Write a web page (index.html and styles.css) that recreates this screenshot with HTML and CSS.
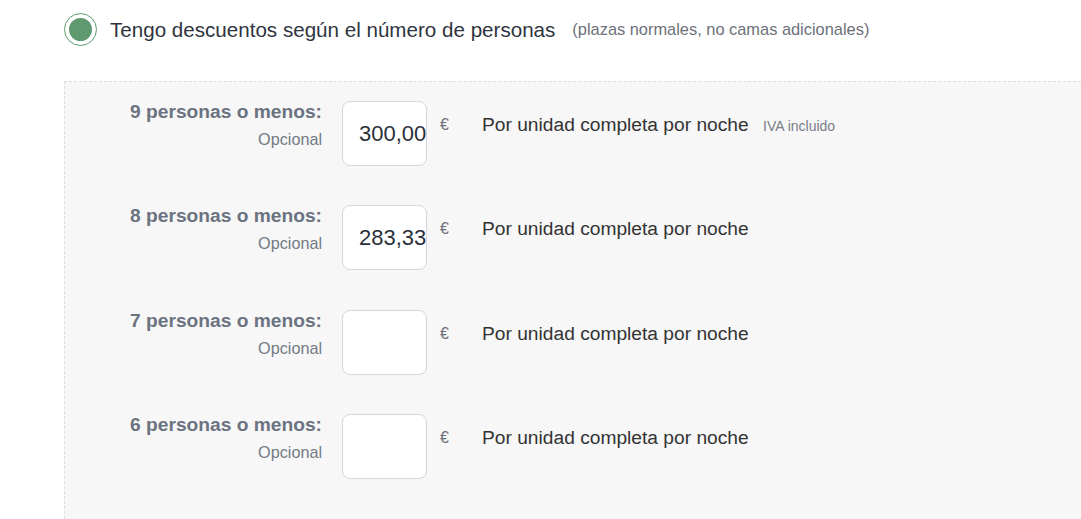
FILE: index.html
```html
<!DOCTYPE html>
<html lang="es">
<head>
<meta charset="utf-8">
<link rel="stylesheet" href="styles.css">
</head>
<body>
<div class="page">
  <label class="option">
    <span class="radio"><span class="radio-dot"></span></span>
    <span class="option-title">Tengo descuentos según el número de personas</span>
    <span class="option-note">(plazas normales, no camas adicionales)</span>
  </label>

  <div class="panel">
    <div class="row">
      <div class="label">
        <div class="label-main">9 personas o menos:</div>
        <div class="label-sub">Opcional</div>
      </div>
      <div class="field"><input class="price" type="text" value="300,00"></div>
      <div class="currency">€</div>
      <div class="desc">Por unidad completa por noche <span class="tax">IVA incluido</span></div>
    </div>
    <div class="row">
      <div class="label">
        <div class="label-main">8 personas o menos:</div>
        <div class="label-sub">Opcional</div>
      </div>
      <div class="field"><input class="price" type="text" value="283,33"></div>
      <div class="currency">€</div>
      <div class="desc">Por unidad completa por noche</div>
    </div>
    <div class="row">
      <div class="label">
        <div class="label-main">7 personas o menos:</div>
        <div class="label-sub">Opcional</div>
      </div>
      <div class="field"><input class="price" type="text" value=""></div>
      <div class="currency">€</div>
      <div class="desc">Por unidad completa por noche</div>
    </div>
    <div class="row">
      <div class="label">
        <div class="label-main">6 personas o menos:</div>
        <div class="label-sub">Opcional</div>
      </div>
      <div class="field"><input class="price" type="text" value=""></div>
      <div class="currency">€</div>
      <div class="desc">Por unidad completa por noche</div>
    </div>
  </div>
</div>
</body>
</html>
```

FILE: styles.css
```css
html, body {
  margin: 0;
  padding: 0;
  background: #ffffff;
  overflow: hidden;
}

body {
  font-family: "Liberation Sans", Arial, sans-serif;
  color: #333333;
  width: 1081px;
  height: 519px;
}

.page {
  box-sizing: border-box;
  height: 519px;
  padding: 13px 0 0 64px;
  display: flex;
  flex-direction: column;
}

.option {
  display: flex;
  align-items: center;
  height: 33px;
  flex: none;
}

.radio {
  box-sizing: border-box;
  width: 33px;
  height: 33px;
  border: 1px solid #5e9a6d;
  border-radius: 50%;
  display: flex;
  align-items: center;
  justify-content: center;
  background: #fff;
  flex: none;
}

.radio-dot {
  width: 23px;
  height: 23px;
  border-radius: 50%;
  background: #5e9a6d;
}

.option-title {
  margin-left: 13px;
  font-size: 20.6px;
  color: #2f3440;
}

.option-note {
  margin-left: 17px;
  font-size: 16.4px;
  color: #6c7079;
}

.panel {
  flex: 1;
  margin-top: 35px;
  border: 1px dashed #dedede;
  border-right: none;
  border-bottom: none;
  background: #f7f7f7;
  padding-top: 19px;
  box-sizing: border-box;
  overflow: hidden;
}

.row {
  display: flex;
  align-items: flex-start;
  height: 65px;
  margin-bottom: 39.4px;
}

.label {
  width: 257px;
  text-align: right;
}

.label-main {
  font-weight: bold;
  font-size: 19.2px;
  line-height: 22px;
  color: #6b7380;
}

.label-sub {
  margin-top: 6px;
  font-size: 16.2px;
  line-height: 20px;
  color: #737a85;
}

.field {
  margin-left: 20px;
}

.price {
  box-sizing: border-box;
  width: 85px;
  height: 65px;
  border: 1px solid #d6d6de;
  border-radius: 8px;
  background: #ffffff;
  padding: 0 0 0 16px;
  font-family: "Liberation Sans", Arial, sans-serif;
  font-size: 22px;
  color: #2b2f3a;
  outline: none;
}

.currency {
  margin-left: 13px;
  padding-top: 14px;
  font-size: 16px;
  line-height: 20px;
  color: #6c7079;
  width: 42px;
}

.desc {
  padding-top: 13px;
  font-size: 19.2px;
  line-height: 22px;
  color: #333333;
}

.tax {
  margin-left: 9px;
  font-size: 14px;
  color: #777d87;
}
```
